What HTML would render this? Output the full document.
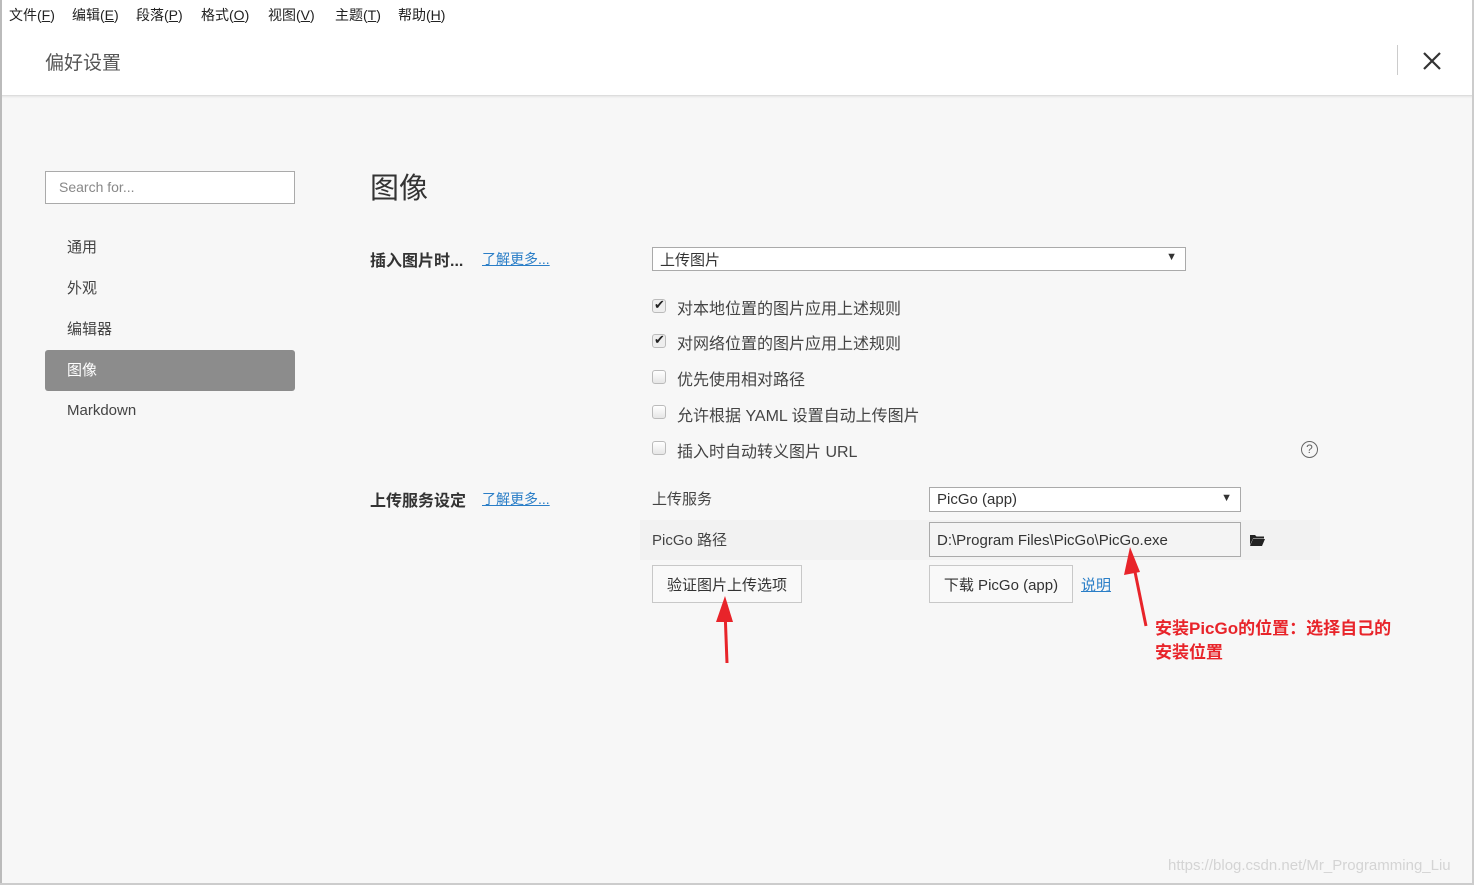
<!DOCTYPE html>
<html><head><meta charset="utf-8"><style>
*{margin:0;padding:0;box-sizing:border-box}
body{width:1474px;height:885px;overflow:hidden;background:#f7f7f7;font-family:"Liberation Sans","Noto Sans CJK SC",sans-serif;color:#333;position:relative}
.a{position:absolute;white-space:nowrap}
.menu{position:absolute;left:0;top:0;width:1474px;height:96px;background:#fff;border-bottom:1px solid #ddd;box-shadow:0 1px 2px rgba(0,0,0,.08)}
.menu span{position:absolute;top:5px;font-size:14px;color:#222}
.cb{position:absolute;left:652px;width:14px;height:14px;border:1px solid #bbb;border-radius:3px;background:linear-gradient(#fff,#e6e6e6)}
.lbl{font-size:16px;color:#444}
.sel{position:absolute;background:#fff;border:1px solid #aaa;font-size:15px;color:#333;padding-left:7px}
.btn{position:absolute;border:1px solid #c8c8c8;background:#f9f9f9;font-size:15px;color:#333;text-align:center}
a{color:#2a7ec7;text-decoration:underline}
</style></head><body>
<div class="menu">
<span style="left:9px">文件(<u>F</u>)</span>
<span style="left:72px">编辑(<u>E</u>)</span>
<span style="left:136px">段落(<u>P</u>)</span>
<span style="left:201px">格式(<u>O</u>)</span>
<span style="left:268px">视图(<u>V</u>)</span>
<span style="left:335px">主题(<u>T</u>)</span>
<span style="left:398px">帮助(<u>H</u>)</span>
<span style="left:45px;top:48px;font-size:19px;color:#555">偏好设置</span>
<div class="a" style="left:1397px;top:45px;width:1px;height:30px;background:#ccc"></div>
<svg class="a" style="left:1422px;top:51px" width="20" height="20"><path d="M2 2L18 18M18 2L2 18" stroke="#333" stroke-width="2.2"/></svg>
</div>
<div class="a" style="left:0;top:0;width:2px;height:885px;background:#bbb"></div>
<div class="a" style="left:1472px;top:0;width:2px;height:885px;background:#ccc"></div>
<div class="a" style="left:0;top:883px;width:1474px;height:2px;background:#ccc"></div>

<div class="a" style="left:45px;top:171px;width:250px;height:33px;border:1px solid #aaa;background:#fff;font-size:14px;color:#888;padding:7px 0 0 13px">Search for...</div>
<div class="a lbl" style="left:67px;top:236px;font-size:15px">通用</div>
<div class="a lbl" style="left:67px;top:277px;font-size:15px">外观</div>
<div class="a lbl" style="left:67px;top:318px;font-size:15px">编辑器</div>
<div class="a" style="left:45px;top:350px;width:250px;height:41px;background:#8c8c8c;border-radius:3px;color:#fff;font-size:15px;padding:9px 0 0 22px">图像</div>
<div class="a lbl" style="left:67px;top:402px;font-size:15px">Markdown</div>

<div class="a" style="left:370px;top:165px;font-size:29px;color:#333">图像</div>
<div class="a" style="left:370px;top:247px;font-size:16px;font-weight:bold;color:#333">插入图片时...</div>
<div class="a" style="left:482px;top:249px;font-size:14px"><a>了解更多...</a></div>
<div class="sel" style="left:652px;top:247px;width:534px;height:24px;padding-top:1px">上传图片<span style="position:absolute;right:8px;top:3px;font-size:11px">▼</span></div>

<div class="cb" style="top:299px;background:#eee"><span style="position:absolute;left:1px;top:-3px;font-size:13px;color:#222">✔</span></div>
<div class="a lbl" style="left:677px;top:295px">对本地位置的图片应用上述规则</div>
<div class="cb" style="top:334px;background:#eee"><span style="position:absolute;left:1px;top:-3px;font-size:13px;color:#222">✔</span></div>
<div class="a lbl" style="left:677px;top:330px">对网络位置的图片应用上述规则</div>
<div class="cb" style="top:370px"></div>
<div class="a lbl" style="left:677px;top:366px">优先使用相对路径</div>
<div class="cb" style="top:405px"></div>
<div class="a lbl" style="left:677px;top:402px">允许根据 YAML 设置自动上传图片</div>
<div class="cb" style="top:441px"></div>
<div class="a lbl" style="left:677px;top:438px">插入时自动转义图片 URL</div>
<div class="a" style="left:1301px;top:441px;width:17px;height:17px;border:1.5px solid #666;border-radius:50%;font-size:12px;color:#666;text-align:center;line-height:14px">?</div>

<div class="a" style="left:370px;top:487px;font-size:16px;font-weight:bold;color:#333">上传服务设定</div>
<div class="a" style="left:482px;top:489px;font-size:14px"><a>了解更多...</a></div>
<div class="a" style="left:652px;top:488px;font-size:15px;color:#444">上传服务</div>
<div class="sel" style="left:929px;top:487px;width:312px;height:25px;padding-top:3px">PicGo (app)<span style="position:absolute;right:8px;top:4px;font-size:11px">▼</span></div>
<div class="a" style="left:640px;top:520px;width:680px;height:40px;background:#f2f2f2"></div>
<div class="a" style="left:652px;top:529px;font-size:15px;color:#444">PicGo 路径</div>
<div class="sel" style="left:929px;top:522px;width:312px;height:35px;padding-top:9px;background:#f4f4f4">D:\Program Files\PicGo\PicGo.exe</div>
<svg class="a" style="left:1250px;top:534px" width="15" height="12"><path d="M0 1h5l1.5 1.5H14v2H3L0 11z M3 5h12l-3 7H0z" fill="#222"/></svg>
<div class="btn" style="left:652px;top:565px;width:150px;height:38px;padding-top:8px">验证图片上传选项</div>
<div class="btn" style="left:929px;top:565px;width:144px;height:38px;padding-top:8px">下载 PicGo (app)</div>
<div class="a" style="left:1081px;top:574px;font-size:15px"><a>说明</a></div>

<svg class="a" style="left:0;top:0" width="1474" height="885">
<path d="M727 663L725 610" stroke="#e8242a" stroke-width="3"/><path d="M716 622L725 596L733 622Z" fill="#e8242a"/>
<path d="M1146 626L1133 562" stroke="#e8242a" stroke-width="3"/><path d="M1124 575L1130 547L1140 572Z" fill="#e8242a"/>
</svg>
<div class="a" style="left:1155px;top:617px;font-size:17px;font-weight:bold;color:#e8242a;line-height:24px">安装PicGo的位置：选择自己的<br>安装位置</div>
<div class="a" style="left:1168px;top:857px;font-size:15px;color:#d4d4d4">https://blog.csdn.net/Mr_Programming_Liu</div>
</body></html>
